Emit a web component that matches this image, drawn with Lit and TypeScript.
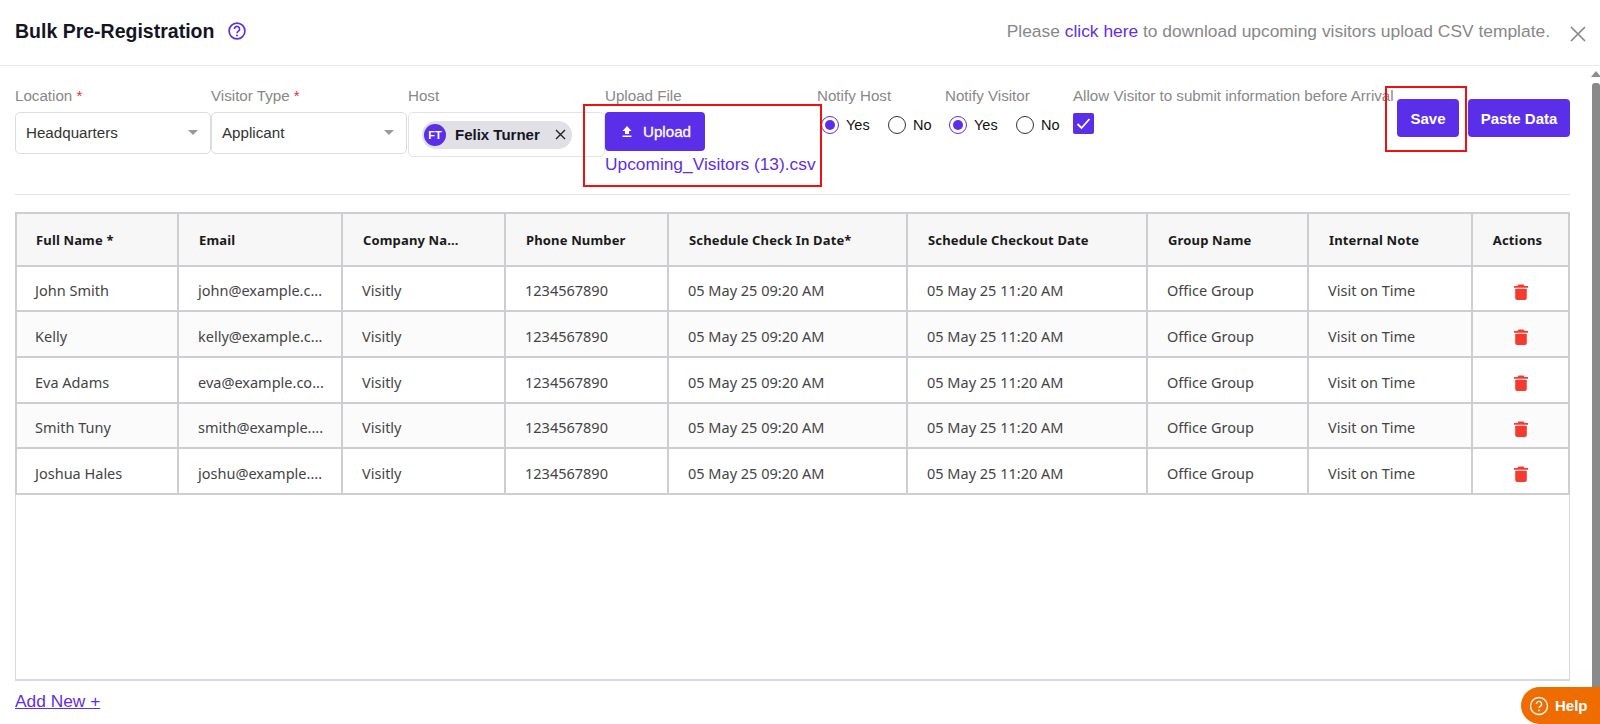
import { LitElement, html, css } from "lit";
import { customElement } from "lit/decorators.js";

const rows = [
  ["John Smith", "john@example.c..."],
  ["Kelly", "kelly@example.c..."],
  ["Eva Adams", "eva@example.co..."],
  ["Smith Tuny", "smith@example...."],
  ["Joshua Hales", "joshu@example...."],
];
const heads = ["Full Name *", "Email", "Company Na...", "Phone Number", "Schedule Check In Date*", "Schedule Checkout Date", "Group Name", "Internal Note", "Actions"];
const widths = [162, 164, 163, 163, 239, 240, 161, 164, 97];

@customElement("app-root")
export class AppRoot extends LitElement {
  static styles = css`
    :host { display: flex; flex-direction: column; height: 724px; width: 1600px; overflow: hidden; position: relative; background: #fff; font-family: "Liberation Sans", Arial, sans-serif; color: #111; }
    a { color: #5f2eea; }
    .top { flex: none; height: 66px; box-sizing: border-box; border-bottom: 1px solid #e6e9f0; display: flex; align-items: center; padding: 0 14px 3px 15px; }
    .title { font-size: 19.500px; font-weight: 700; color: #15151f; }
    .q { margin-left: 14px; display: block; }
    .note { margin-left: auto; font-size: 17.400px; color: #888; }
    .note a { text-decoration: none; }
    .close { margin-left: 20px; display: block; margin-top: 5px; }
    .content { flex: 1; min-height: 0; display: flex; }
    .main { flex: 1; min-width: 0; padding: 0 22px 0 15px; display: flex; flex-direction: column; }
    .bar { flex: none; width: 8px; display: flex; flex-direction: column; align-items: center; }
    .arrow { width: 0; height: 0; border-left: 5px solid transparent; border-right: 5px solid transparent; border-bottom: 6px solid #8c8c8c; margin-top: 5px; }
    .thumb { flex: 1; width: 8px; margin-top: 6px; background: #8a8a8a; border-radius: 3px 3px 0 0; }
    .form { flex: none; height: 129px; box-sizing: border-box; padding-top: 21px; display: flex; border-bottom: 1px solid #e3e3e6; }
    .f { flex: none; display: flex; flex-direction: column; }
    .lab { font-size: 15.170px; line-height: 17px; height: 17px; color: #888; margin-bottom: 8px; white-space: nowrap; }
    .lab i { color: #e5323c; font-style: normal; }
    .sel { box-sizing: border-box; height: 42px; border: 1px solid #dcdce0; border-radius: 5px; display: flex; align-items: center; padding: 0 12px 2px 10px; font-size: 15.170px; color: #333; justify-content: space-between; }
    .car { width: 0; height: 0; border-left: 5px solid transparent; border-right: 5px solid transparent; border-top: 5px solid #999; }
    .host { box-sizing: border-box; height: 45px; border: 1px solid #e3e3e6; border-radius: 5px; display: flex; align-items: center; padding-left: 13px; }
    .chip { height: 28px; width: 150px; box-sizing: border-box; border-radius: 14px; background: #e0e0e6; display: flex; align-items: center; padding: 0 5px 0 2px; font-weight: 700; font-size: 15px; color: #15151f; }
    .av { width: 22px; height: 22px; border-radius: 50%; background: #5b2ee9; color: #fff; font-size: 11px; display: flex; align-items: center; justify-content: center; margin-right: 9px; }
    .chip svg { margin-left: auto; margin-right: 1px; }
    .up { position: relative; }
    .btn { box-sizing: border-box; border: 0; background: #5b2ee9; color: #fff; border-radius: 4px; font: 700 15px "Liberation Sans", Arial, sans-serif; display: flex; align-items: center; justify-content: center; }
    .ub { width: 100px; height: 39px; gap: 10px; font-weight: 400; font-size: 15.170px; -webkit-text-stroke: 0.3px #fff; padding-left: 2px; }
    .file { font-size: 17.330px; line-height: 20px; margin-top: 3px; color: #5f2eea; white-space: nowrap; }
    .red { position: absolute; border: 2px solid #f01010; box-sizing: border-box; pointer-events: none; }
    .r1 { left: -22px; top: -8px; width: 239px; height: 83px; }
    .r2 { left: -12px; top: -13px; width: 82px; height: 66px; }
    .radios { display: flex; align-items: center; font-size: 14.500px; height: 20px; padding-left: 4px; margin-top: 3px; }
    .rd { width: 18px; height: 18px; box-sizing: border-box; border-radius: 50%; border: 1.500px solid #333; background: #fff; margin-right: 7px; flex: none; display: flex; align-items: center; justify-content: center; }
    .rd.on { border-color: #5b2ee9; }
    .rd.on::after { content: ""; width: 10px; height: 10px; border-radius: 50%; background: #5b2ee9; }
    .ry { width: 42px; }
    .chk { width: 21px; height: 21px; margin-top: 1px; background: #5b2ee9; border-radius: 2px; display: flex; align-items: center; justify-content: center; }
    .acts { margin-left: auto; display: flex; gap: 9px; padding-top: 12px; }
    .act { position: relative; height: 38px; }
    .act .btn { height: 38px; padding: 0; }
    .tw { flex: none; box-sizing: border-box; height: 469px; margin-top: 17px; border: 1px solid #d8d8e0; border-bottom-width: 2px; }
    table { border-collapse: collapse; table-layout: fixed; width: 1553px; font-family: "Noto Sans", "Open Sans", sans-serif; margin: -1px 0 0 -1px; }
    th, td { border: 2px solid #cdcdd2; text-align: left; overflow: hidden; white-space: nowrap; box-sizing: border-box; }
    th { height: 53px; padding: 0 0 0 20px; background: #f7f7f7; font-size: 13px; font-weight: 700; color: #1a1a1a; letter-spacing: 0.150px; }
    th:first-child { padding-left: 19px; }
    th:last-child { text-align: center; padding: 0 6px 0 0; }
    td { height: 46px; padding: 3px 0 0 19px; font-size: 14.500px; font-weight: 400; color: #444; }
    td:first-child { padding-left: 18px; }
    tbody tr:nth-child(3n + 1) td { height: 45px; }
    td.c { text-align: center; padding: 2px 0 0; }
    td.c svg { display: inline-block; vertical-align: middle; }
    tbody tr:nth-child(even) td { background: #fbfbfb; }
    .add { font-size: 17.330px; margin-top: 10px; align-self: flex-start; }
    .help { position: absolute; right: 0; bottom: 0; width: 79px; height: 37px; background: #ee6c00; border-radius: 19px 0 0 19px; color: #fff; font-size: 15px; font-weight: 700; display: flex; align-items: center; padding-left: 8px; box-sizing: border-box; gap: 6px; }
  `;

  render() {
    const trash = html`<svg width="14" height="16" viewBox="0 0 14 16"><path fill="#f53b30" d="M4.500 0.500h5L10.500 2H14v1.700H0V2h3.500zM1.200 4.800h11.600V14a2 2 0 0 1-2 2H3.200a2 2 0 0 1-2-2z"/></svg>`;
    return html`
      <div class="top">
        <div class="title">Bulk Pre-Registration</div>
        <svg class="q" width="18" height="18" viewBox="0 0 18 18" fill="none"><circle cx="9" cy="9" r="7.900" stroke="#5b2ee9" stroke-width="1.700"/><path d="M6.400 7a2.600 2.600 0 1 1 4 2.200c-.9.600-1.400 1-1.400 2" stroke="#5b2ee9" stroke-width="1.600"/><circle cx="9" cy="13.400" r="1" fill="#5b2ee9"/></svg>
        <div class="note">Please <a href="#">click here</a> to download upcoming visitors upload CSV template.</div>
        <svg class="close" width="16" height="16" viewBox="0 0 16 16"><path d="M1 1l14 14M15 1L1 15" stroke="#888" stroke-width="1.700"/></svg>
      </div>
      <div class="content">
        <div class="main">
          <div class="form">
            <div class="f" style="width:196px"><div class="lab">Location <i>*</i></div><div class="sel">Headquarters<span class="car"></span></div></div>
            <div class="f" style="width:196px"><div class="lab">Visitor Type <i>*</i></div><div class="sel">Applicant<span class="car"></span></div></div>
            <div class="f" style="width:197px;margin-left:1px"><div class="lab">Host</div>
              <div class="host"><div class="chip"><span class="av">FT</span>Felix Turner
                <svg width="11" height="11" viewBox="0 0 11 11"><path d="M1 1l9 9M10 1l-9 9" stroke="#222" stroke-width="1.400"/></svg></div></div></div>
            <div class="f" style="width:212px"><div class="lab">Upload File</div>
              <div class="up">
                <div class="btn ub"><svg width="12" height="13" viewBox="0 0 12 13"><path fill="#fff" d="M6 1l4.500 5H8v3H4V6H1.500zM1.500 10.500h9V12h-9z"/></svg>Upload</div>
                <div class="file">Upcoming_Visitors (13).csv</div>
                <div class="red r1"></div>
              </div></div>
            <div class="f" style="width:128px"><div class="lab">Notify Host</div>
              <div class="radios"><span class="rd on"></span><span class="ry">Yes</span><span class="rd"></span>No</div></div>
            <div class="f" style="width:128px"><div class="lab">Notify Visitor</div>
              <div class="radios"><span class="rd on"></span><span class="ry">Yes</span><span class="rd"></span>No</div></div>
            <div class="f" style="width:0"><div class="lab">Allow Visitor to submit information before Arrival</div>
              <div class="chk"><svg width="15" height="13" viewBox="0 0 15 13" fill="none"><path d="M1.500 7l4 4L13.500 2" stroke="#fff" stroke-width="1.800"/></svg></div></div>
            <div class="acts">
              <div class="act" style="width:62px"><div class="btn">Save</div><div class="red r2"></div></div>
              <div class="act" style="width:102px"><div class="btn">Paste Data</div></div>
            </div>
          </div>
          <div class="tw">
            <table>
              <colgroup>${widths.map((w) => html`<col style="width:${w}px" />`)}</colgroup>
              <thead><tr>${heads.map((h) => html`<th>${h}</th>`)}</tr></thead>
              <tbody>
                ${rows.map((r) => html`<tr>
                  <td>${r[0]}</td><td>${r[1]}</td><td>Visitly</td><td>1234567890</td>
                  <td>05 May 25 09:20 AM</td><td>05 May 25 11:20 AM</td><td>Office Group</td><td>Visit on Time</td>
                  <td class="c">${trash}</td></tr>`)}
              </tbody>
            </table>
          </div>
          <a class="add" href="#">Add New +</a>
        </div>
        <div class="bar"><span class="arrow"></span><span class="thumb"></span></div>
      </div>
      <div class="help">
        <svg width="20" height="20" viewBox="0 0 20 20" fill="none"><circle cx="10" cy="10" r="8.500" stroke="#fff" stroke-width="1.300"/><path d="M7.400 8a2.600 2.600 0 1 1 4 2.200c-.9.600-1.400 1-1.400 1.900" stroke="#fff" stroke-width="1.400"/><circle cx="10" cy="14.400" r=".9" fill="#fff"/></svg>
        Help
      </div>
    `;
  }
}
